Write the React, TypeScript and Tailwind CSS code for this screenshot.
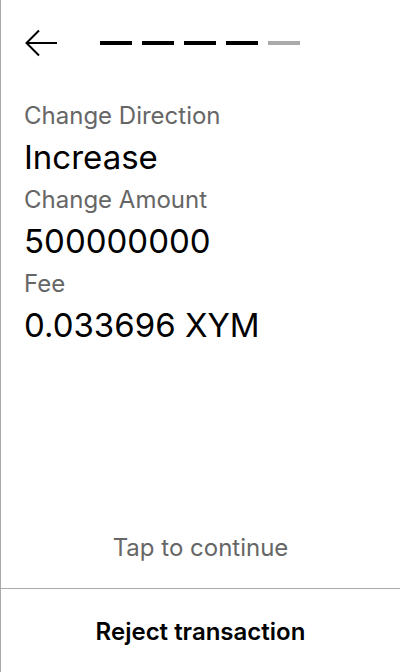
import React from "react";

export default function App() {
  const dashes = ["bg-black", "bg-black", "bg-black", "bg-black", "bg-[#aaaaaa]"];
  return (
    <div
      className="w-[400px] h-[672px] bg-white border-l border-[#aaaaaa] flex flex-col text-black"
      style={{ fontFamily: "Inter, 'Noto Sans', sans-serif" }}
    >
      <div className="flex items-center h-[86px] pl-[24px]">
        <svg width="34" height="28" viewBox="0 0 34 28" className="shrink-0">
          <path d="M1.5 14 H32 M14 1.5 L1.5 14 L14 26.5" fill="none" stroke="black" strokeWidth="2" />
        </svg>
        <div className="flex gap-[10px] ml-[41px]">
          {dashes.map((c, i) => (
            <div key={i} className={`w-[32px] h-[4px] ${c}`} />
          ))}
        </div>
      </div>
      <div className="flex flex-col px-[23px] pt-[9px]">
        <div className="h-[42px] flex items-center text-[24px] text-[#666666]">Change Direction</div>
        <div className="h-[42px] flex items-center text-[33px]">Increase</div>
        <div className="h-[42px] flex items-center text-[24px] text-[#666666]">Change Amount</div>
        <div className="h-[42px] flex items-center text-[33px]">500000000</div>
        <div className="h-[42px] flex items-center text-[24px] text-[#666666]">Fee</div>
        <div className="h-[42px] flex items-center text-[33px]">0.033696 XYM</div>
      </div>
      <div className="flex-1" />
      <div className="h-[64px] flex items-center justify-center text-[24px] text-[#666666] pb-[16px]">
        Tap to continue
      </div>
      <div className="border-t border-[#aaaaaa] h-[84px] flex items-center justify-center text-[24px] font-semibold pt-[2px]">
        Reject transaction
      </div>
    </div>
  );
}
